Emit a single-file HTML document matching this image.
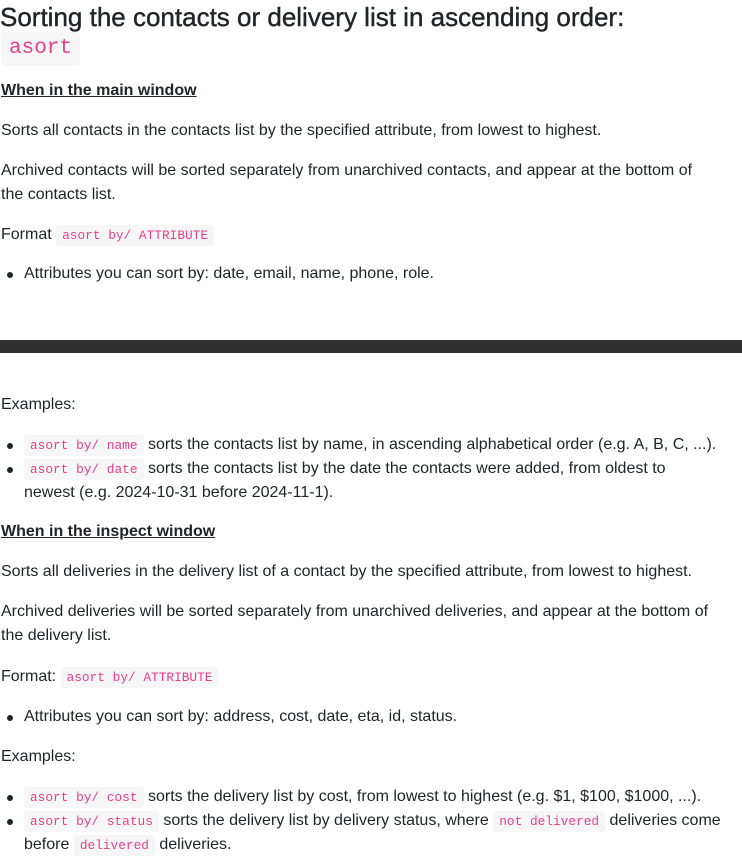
<!DOCTYPE html>
<html><head><meta charset="utf-8"><style>
body{margin:0;width:742px;height:863px;background:#fff;color:#212529;font-family:"Liberation Sans",sans-serif;font-size:16px;position:relative;overflow:hidden}
.l{position:absolute;left:1px;line-height:24px;white-space:nowrap}
code{font-family:"Liberation Mono",monospace;font-size:12.8px;color:#e83e8c;background:#f6f6f6;padding:3px 6px;border-radius:3px}
h1{position:absolute;left:0;top:1px;margin:0;font-size:26px;font-weight:normal;line-height:32px;color:#212529;-webkit-text-stroke:0.4px #212529}
.h{font-weight:bold;text-decoration:underline}
.b{left:24px}
.b:before{content:"";position:absolute;left:-17px;top:10px;width:6px;height:6px;border-radius:50%;background:#212529}
.bar{position:absolute;left:0;top:340px;width:742px;height:13px;background:#2f2f2f}
</style></head><body>
<h1>Sorting the contacts or delivery list in ascending order:</h1>
<div style="position:absolute;left:1px;top:32px;background:#f6f6f6;border-radius:4px;padding:2px 8px;height:30px;font-family:'Liberation Mono',monospace;font-size:21px;line-height:30px;color:#e83e8c">asort</div>
<div class="l h" style="top:79px">When in the main window</div>
<div class="l" style="top:119px">Sorts all contacts in the contacts list by the specified attribute, from lowest to highest.</div>
<div class="l" style="top:159px">Archived contacts will be sorted separately from unarchived contacts, and appear at the bottom of</div>
<div class="l" style="top:183px">the contacts list.</div>
<div class="l" style="top:223px">Format <code>asort by/ ATTRIBUTE</code></div>
<div class="l b" style="top:262px">Attributes you can sort by: date, email, name, phone, role.</div>
<div class="bar"></div>
<div class="l" style="top:393px">Examples:</div>
<div class="l b" style="top:433px"><code>asort by/ name</code> sorts the contacts list by name, in ascending alphabetical order (e.g. A, B, C, ...).</div>
<div class="l b" style="top:457px"><code>asort by/ date</code> sorts the contacts list by the date the contacts were added, from oldest to</div>
<div class="l" style="top:481px;left:24px">newest (e.g. 2024-10-31 before 2024-11-1).</div>
<div class="l h" style="top:520px">When in the inspect window</div>
<div class="l" style="top:560px">Sorts all deliveries in the delivery list of a contact by the specified attribute, from lowest to highest.</div>
<div class="l" style="top:600px">Archived deliveries will be sorted separately from unarchived deliveries, and appear at the bottom of</div>
<div class="l" style="top:624px">the delivery list.</div>
<div class="l" style="top:665px">Format: <code>asort by/ ATTRIBUTE</code></div>
<div class="l b" style="top:705px">Attributes you can sort by: address, cost, date, eta, id, status.</div>
<div class="l" style="top:745px">Examples:</div>
<div class="l b" style="top:785px"><code>asort by/ cost</code> sorts the delivery list by cost, from lowest to highest (e.g. $1, $100, $1000, ...).</div>
<div class="l b" style="top:809px"><code>asort by/ status</code> sorts the delivery list by delivery status, where <code>not delivered</code> deliveries come</div>
<div class="l" style="top:833px;left:24px">before <code>delivered</code> deliveries.</div>
</body></html>
